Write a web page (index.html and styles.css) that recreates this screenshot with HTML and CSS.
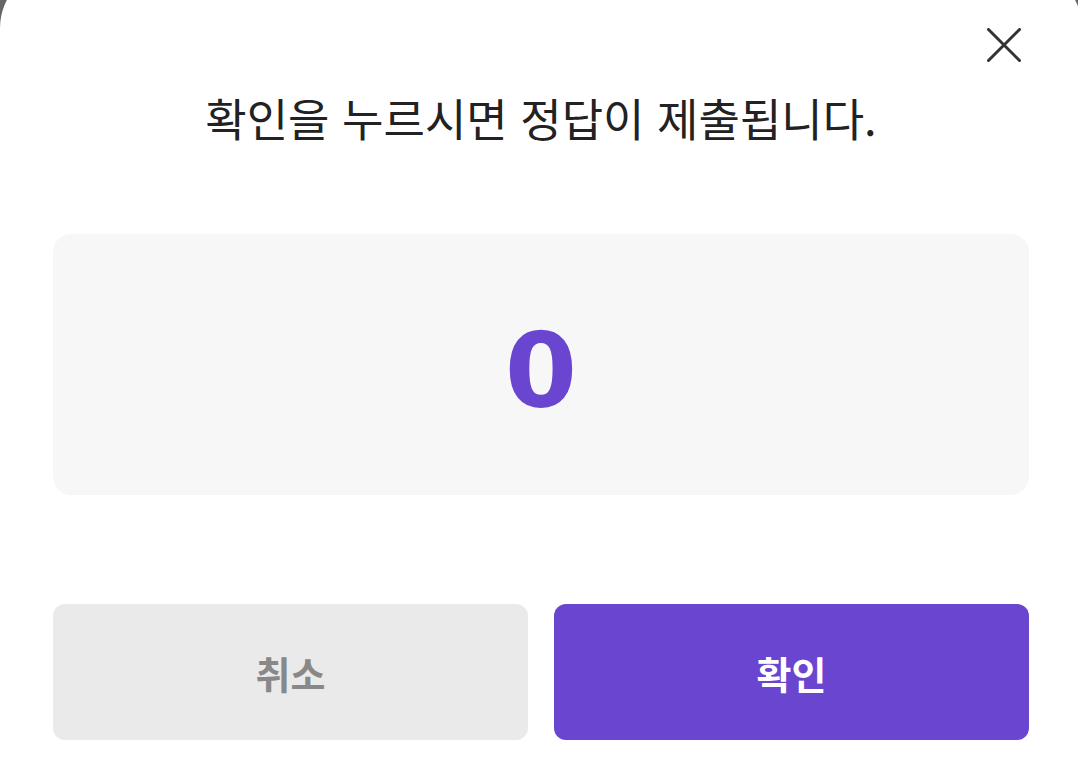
FILE: index.html
```html
<!DOCTYPE html>
<html lang="ko">
<head>
  <meta charset="UTF-8" />
  <meta name="viewport" content="width=device-width, initial-scale=1.0" />
  <title>정답 제출</title>
  <link rel="stylesheet" href="styles.css">
</head>
<body>
  <div class="sheet">
    <div class="sheet-top">
      <button class="close-btn" aria-label="닫기">
        <svg width="34" height="34" viewBox="0 0 34 34">
          <path d="M1.5 1.5 L32.5 32.5 M32.5 1.5 L1.5 32.5" stroke="#333" stroke-width="3" stroke-linecap="round" fill="none" />
        </svg>
      </button>
    </div>

    <h2 class="title">확인을 누르시면 정답이 제출됩니다.</h2>

    <div class="answer-box">
      <span class="answer">0</span>
    </div>

    <div class="actions">
      <button class="btn btn-cancel">취소</button>
      <button class="btn btn-ok">확인</button>
    </div>
  </div>
</body>
</html>
```

FILE: styles.css
```css
html, body {
  height: 100%;
}

body {
  margin: 0;
  padding: 0;
  background-color: #666;
  overflow: hidden;
  font-family: 'Noto Sans CJK KR', 'Noto Sans', sans-serif;
}

.sheet {
  box-sizing: border-box;
  width: calc(100% + 4px);
  height: calc(100% + 32px);
  margin-top: -32px;
  background-color: white;
  border-radius: 60px 60px 0 0;
  padding: 0 53px;
}

.sheet-top {
  display: flex;
  justify-content: flex-end;
  padding-top: 60px;
  margin-right: 8px;
}

.close-btn {
  background: none;
  border: none;
  padding: 0;
  width: 34px;
  height: 34px;
  cursor: pointer;
}

.close-btn svg {
  display: block;
}

.title {
  margin: 28px 0 0;
  text-align: center;
  font-size: 45px;
  font-weight: 400;
  line-height: 56px;
  color: #222;
}

.answer-box {
  margin-top: 88px;
  height: 261px;
  background-color: #f7f7f7;
  border-radius: 18px;
  display: flex;
  justify-content: center;
  align-items: center;
}

.answer {
  font-family: 'DejaVu Sans', sans-serif;
  font-size: 104px;
  font-weight: 700;
  color: #6a45cf;
  line-height: 1;
  padding-top: 12px;
}

.actions {
  display: flex;
  gap: 26px;
  margin-top: 109px;
}

.btn {
  flex: 1;
  height: 136px;
  border: none;
  border-radius: 12px;
  font-family: 'Noto Sans CJK KR', 'Noto Sans', sans-serif;
  font-size: 38px;
  font-weight: 700;
  cursor: pointer;
}

.btn-cancel {
  background-color: #eaeaea;
  color: #888;
}

.btn-ok {
  background-color: #6a45cf;
  color: white;
}
```
